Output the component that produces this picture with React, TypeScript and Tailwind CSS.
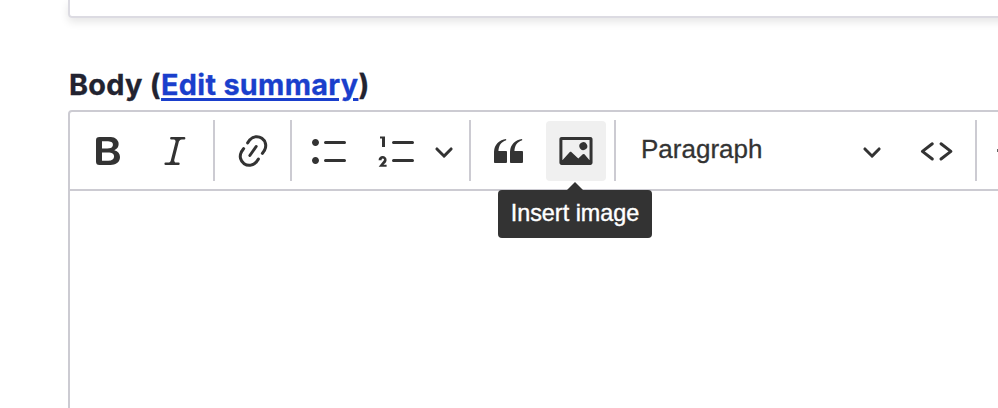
import type { ReactNode } from 'react';

const paths = {
  bold: 'M10.187 17H5.773c-.637 0-1.092-.138-1.364-.415-.273-.277-.409-.718-.409-1.323V4.738c0-.617.14-1.062.419-1.332.279-.27.73-.406 1.354-.406h4.68c.69 0 1.288.041 1.793.124.506.083.96.242 1.36.478.341.197.644.447.906.75a3.262 3.262 0 0 1 .808 2.162c0 1.401-.722 2.426-2.167 3.075C15.05 10.175 16 11.315 16 13.01a3.756 3.756 0 0 1-2.296 3.504 6.1 6.1 0 0 1-1.517.377c-.571.073-1.238.11-2 .11zm-.217-6.217H7v4.087h3.069c1.977 0 2.965-.69 2.965-2.072 0-.707-.256-1.22-.768-1.537-.512-.319-1.277-.478-2.296-.478zM7 5.13v3.619h2.606c.729 0 1.292-.067 1.69-.2a1.6 1.6 0 0 0 .91-.765c.165-.267.247-.566.247-.897 0-.707-.26-1.176-.778-1.409-.519-.232-1.31-.348-2.375-.348H7z',
  italic: 'm9.586 14.633.021.004c-.036.335.095.655.393.962.082.083.173.15.274.201h1.474a.6.6 0 1 1 0 1.2H5.304a.6.6 0 0 1 0-1.2h1.15c.474-.07.809-.182 1.005-.334.157-.122.291-.32.404-.597l2.416-9.55a1.053 1.053 0 0 0-.281-.823 1.12 1.12 0 0 0-.442-.296H8.15a.6.6 0 0 1 0-1.2h6.443a.6.6 0 1 1 0 1.2h-1.195c-.376.056-.65.155-.823.296-.215.175-.423.439-.623.79l-2.366 9.347z',
  link: 'm11.077 15 .991-1.416a.75.75 0 1 1 1.229.86l-1.148 1.64a.748.748 0 0 1-.217.206 5.251 5.251 0 0 1-8.503-5.955.741.741 0 0 1 .12-.274l1.147-1.639a.75.75 0 1 1 1.228.86L4.933 10.7l.006.003a3.75 3.75 0 0 0 6.132 4.294l.006.004zm5.494-5.335a.748.748 0 0 1-.12.274l-1.147 1.639a.75.75 0 1 1-1.228-.86l.86-1.23a3.75 3.75 0 0 0-6.144-4.301l-.86 1.229a.75.75 0 0 1-1.229-.86l1.148-1.64a.748.748 0 0 1 .217-.206 5.251 5.251 0 0 1 8.503 5.955zm-4.563-2.532a.75.75 0 0 1 .184 1.045l-3.155 4.505a.75.75 0 1 1-1.229-.86l3.155-4.506a.75.75 0 0 1 1.045-.184z',
  bullets: 'M7 5.75c0 .414.336.75.75.75h9.5a.75.75 0 1 0 0-1.5h-9.5a.75.75 0 0 0-.75.75zm-6 0C1 4.784 1.777 4 2.75 4c.966 0 1.75.777 1.75 1.75 0 .966-.777 1.75-1.75 1.75C1.784 7.5 1 6.723 1 5.75zm6 9c0 .414.336.75.75.75h9.5a.75.75 0 1 0 0-1.5h-9.5a.75.75 0 0 0-.75.75zm-6 0c0-.966.777-1.75 1.75-1.75.966 0 1.75.777 1.75 1.75 0 .966-.777 1.75-1.75 1.75-.966 0-1.75-.777-1.75-1.75z',
  numbers: 'M7 5.75c0 .414.336.75.75.75h9.5a.75.75 0 1 0 0-1.5h-9.5a.75.75 0 0 0-.75.75zM3.5 3v5H2V3.7H1v-1h2.5V3zM.343 17.857l2.59-3.257H2.92a.6.6 0 1 0-1.04 0H.302a2 2 0 1 1 3.995 0h-.001c-.048.405-.16.734-.333.988-.175.254-.59.692-1.244 1.312H4.3v1h-4l.043-.043zM7 14.75a.75.75 0 0 1 .75-.75h9.5a.75.75 0 1 1 0 1.5h-9.5a.75.75 0 0 1-.75-.75z',
  quote: 'M3 10.423a6.5 6.5 0 0 1 6.056-6.408l.038.67C6.448 5.423 5.354 7.663 5.22 10H9c.552 0 .5.432.5.986v4.511c0 .554-.448.503-1 .503h-5c-.552 0-.5-.449-.5-1.003v-4.574zm8 0a6.5 6.5 0 0 1 6.056-6.408l.038.67c-2.646.739-3.74 2.979-3.873 5.315H17c.552 0 .5.432.5.986v4.511c0 .554-.448.503-1 .503h-5c-.552 0-.5-.449-.5-1.003v-4.574z',
  image: 'M6.91 10.54c.26-.23.64-.21.88.03l3.36 3.14 2.23-2.06a.64.64 0 0 1 .87 0l2.52 2.97V4.5H3.2v10.12l3.71-4.08zm10.27-7.51c.6 0 1.09.47 1.09 1.05v11.84c0 .59-.49 1.06-1.09 1.06H2.79c-.6 0-1.09-.47-1.09-1.06V4.08c0-.58.49-1.05 1.1-1.05h14.38zm-5.22 5.56a1.96 1.96 0 1 1 3.4-1.96 1.96 1.96 0 0 1-3.4 1.96z',
};

function Icon({ name }: { name: keyof typeof paths }) {
  return (
    <svg viewBox="0 0 20 20" className="size-10 shrink-0 fill-[#333333]">
      <path d={paths[name]} />
    </svg>
  );
}

function Chevron() {
  return (
    <svg viewBox="0 0 10 10" className="size-5 shrink-0 fill-[#333333]">
      <path d="M.941 4.523a.75.75 0 1 1 1.06-1.06l3.006 3.005 3.005-3.005a.75.75 0 1 1 1.06 1.06l-3.549 3.55a.75.75 0 0 1-1.168-.136L.941 4.523z" />
    </svg>
  );
}

function Button({ label, children, className = '' }: { label: string; children: ReactNode; className?: string }) {
  return (
    <button aria-label={label} className={`flex size-15 shrink-0 items-center justify-center rounded ${className}`}>
      {children}
    </button>
  );
}

function Separator({ className }: { className: string }) {
  return <span className={`h-[61px] w-0.5 shrink-0 self-start bg-[#cccbd2] ${className}`} />;
}

export default function App() {
  return (
    <div className="h-[408px] w-[998px] overflow-hidden bg-white pl-[68px]">
      <div className="h-[18px] w-[960px] rounded-b border-2 border-t-0 border-[#dcdbe2] shadow-[0_4px_8px_rgba(0,0,0,0.1)]" />

      <div className="mt-[49px] flex h-[43px] items-start pl-px whitespace-pre font-['Inter',sans-serif] text-[28.8px] leading-9 font-bold tracking-[0.31px] text-[#222330] [-webkit-text-stroke:0.3px_currentColor]">
        Body (
        <a href="#" className="text-[#1a3fcc] underline decoration-[3px] underline-offset-[3px]">Edit summary</a>)
      </div>

      <div className="h-[320px] w-[960px] rounded-t border-2 border-[#cccbd2]">
        <div className="flex h-[79px] items-start border-b-2 border-[#cccbd2] pt-2">
          <div className="flex h-[61px] items-start pt-px pl-2">
            <Button label="Bold"><Icon name="bold" /></Button>
            <Button label="Italic" className="ml-[7px]"><Icon name="italic" /></Button>
          </div>
          <Separator className="ml-2" />
          <Button label="Link" className="mt-px ml-2"><Icon name="link" /></Button>
          <Separator className="ml-[7px]" />
          <Button label="Bulleted list" className="mt-px ml-2"><Icon name="bullets" /></Button>
          <Button label="Numbered list" className="mt-px ml-2"><Icon name="numbers" /></Button>
          <button aria-label="List options" className="mt-px flex h-15 w-10 shrink-0 items-center pl-[6px]">
            <Chevron />
          </button>
          <Separator className="ml-[1px]" />
          <Button label="Block quote" className="mt-px ml-[7px]"><Icon name="quote" /></Button>
          <div className="relative mt-px ml-2 h-15 w-15 shrink-0">
            <Button label="Insert image" className="bg-[#f0f0f0]"><Icon name="image" /></Button>
            <div className="absolute top-[61px] left-[-48px] w-[154px]">
              <svg viewBox="0 0 16 8" className="ml-[69px] block h-2 w-4 fill-[#333333]">
                <path d="M0 8 8 0l8 8z" />
              </svg>
              <div className="h-12 rounded bg-[#333333] pt-[9px] text-center font-['Liberation_Sans',Arial,sans-serif] text-[23.4px] leading-7 whitespace-nowrap text-white [-webkit-text-stroke:0.4px_currentColor]">
                Insert image
              </div>
            </div>
          </div>
          <Separator className="ml-2" />
          <button className="mt-px flex h-15 w-[266px] shrink-0 items-center justify-between pl-[25px] font-['Liberation_Sans',Arial,sans-serif] text-[26px] leading-8 text-[#333333] [-webkit-text-stroke:0.3px_currentColor]">
            <span className="mb-1">Paragraph</span>
            <Chevron />
          </button>
          <Button label="Source" className="mt-px ml-[25px]">
            <svg viewBox="0 0 40 40" className="size-10 fill-none stroke-[#333333] stroke-3" strokeLinecap="round" strokeLinejoin="round">
              <path d="m15.3 12.8-9.9 7.6 9.9 7.6M24 12.8l9.9 7.6L24 28" />
            </svg>
          </Button>
          <Separator className="ml-2" />
          <span className="mt-[29px] ml-5 h-[3px] w-3 shrink-0 bg-[#666666]" />
        </div>
      </div>
    </div>
  );
}
